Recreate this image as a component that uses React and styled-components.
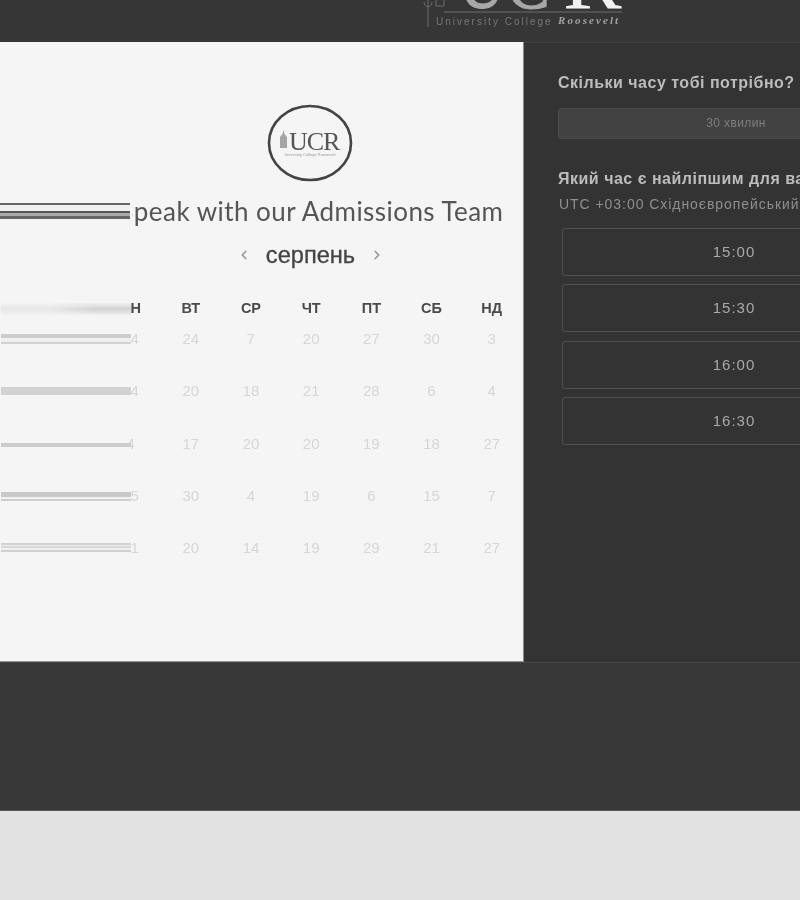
import { createGlobalStyle } from "styled-components";
import styled from "styled-components";
import { ChevronLeft, ChevronRight } from "lucide-react";

const GlobalStyle = createGlobalStyle`
  html, body {
    margin: 0;
    padding: 0;
    background: #e2e2e2;
    font-family: "Liberation Sans", Arial, sans-serif;
  }
`;

const Page = styled.div`
  width: 800px;
  height: 900px;
  overflow: hidden;
  background: #e2e2e2;
  filter: blur(0.45px);
`;

const Header = styled.header`
  height: 42px;
  background: #363636;
  display: flex;
  padding-left: 422px;
  box-sizing: border-box;
`;

const Main = styled.main`
  display: flex;
  height: 620px;
  width: 1000px;
`;

const LeftCard = styled.section`
  width: 524px;
  flex: none;
  box-sizing: border-box;
  background: #f5f5f5;
  border-right: 1px solid #8c8c8c;
  border-bottom: 1px solid #8c8c8c;
  padding: 62px 0 0 100px;
  display: flex;
  flex-direction: column;
  align-items: center;
`;

const LogoWrap = styled.div`
  margin-right: 4px;
  height: 78px;
`;

const Heading = styled.h1`
  position: relative;
  margin: 14px 0 0;
  width: 100%;
  height: 30px;
  text-align: center;
  font-family: Lato, sans-serif;
  font-weight: 400;
  font-size: 26px;
  letter-spacing: 0.45px;
  line-height: 30px;
  color: #555;
  white-space: nowrap;
`;

const HeadingText = styled.span`
  display: inline-block;
  clip-path: inset(0 0 0 13px);
`;

const Streak = styled.div`
  position: absolute;
  left: -100px;
  width: 130px;
  top: ${(p) => p.$top}px;
  height: ${(p) => p.$height}px;
  background: ${(p) => p.$bg};
`;

const MonthRow = styled.div`
  margin: 14px 2px 0 0;
  height: 30px;
  display: flex;
  align-items: center;
  justify-content: center;
  gap: 15px;
  font-size: 23.6px;
  color: #444;
  -webkit-text-stroke: 0.3px #444;
  svg {
    color: #999;
  }
`;

const Calendar = styled.div`
  margin-top: 33px;
  width: 422px;
`;

const Week = styled.div`
  position: relative;
  display: grid;
  grid-template-columns: repeat(7, 60.2px);
  height: ${(p) => (p.$head ? "10px" : "52.25px")};
  line-height: ${(p) => (p.$head ? "10px" : "52.25px")};
  text-align: center;
  font-size: ${(p) => (p.$head ? "14.5px" : "15px")};
  font-weight: ${(p) => (p.$head ? 700 : 400)};
  color: ${(p) => (p.$head ? "#4a4a4a" : "#d6d6d6")};
  & > div:first-child {
    clip-path: ${(p) => (p.$clip ? "inset(0 0 0 30px)" : "none")};
  }
`;

const RightPanel = styled.section`
  flex: 1;
  background: #333333;
  box-sizing: border-box;
  border-top: 1px solid #424242;
  padding: 30px 0 0 34px;
`;

const Question = styled.h2`
  margin: ${(p) => p.$top || 0}px 0 0;
  font-size: 16px;
  line-height: 20px;
  font-weight: 700;
  letter-spacing: 0.5px;
  color: #bdbdbd;
  white-space: nowrap;
`;

const DurationButton = styled.div`
  margin-top: 15px;
  width: 356px;
  height: 31px;
  box-sizing: border-box;
  background: #424242;
  border: 1px solid #4b4b4b;
  border-radius: 3px;
  text-align: center;
  line-height: 29px;
  font-size: 12px;
  letter-spacing: 0.4px;
  color: #7f7f7f;
`;

const Zone = styled.div`
  margin-top: 7px;
  font-size: 14px;
  line-height: 16px;
  letter-spacing: 0.95px;
  color: #8f8f8f;
  white-space: nowrap;
  padding-left: 1px;
`;

const Slots = styled.div`
  margin: 16px 0 0 4px;
  display: flex;
  flex-direction: column;
  gap: 8.3px;
`;

const Slot = styled.div`
  width: 344px;
  height: 48px;
  box-sizing: border-box;
  border: 1px solid #505050;
  border-radius: 3px;
  text-align: center;
  line-height: 46px;
  font-size: 15px;
  letter-spacing: 1px;
  color: #a8a8a8;
`;

const Footer = styled.footer`
  height: 149px;
  box-sizing: border-box;
  background: #383838;
  border-top: 1px solid #474747;
  border-bottom: 1px solid #555;
`;

const HeaderLogo = () => (
  <svg width="204" height="42" viewBox="0 0 204 42">
    <path d="M6 0v27M2 2c0 6 8 6 8 0M14 0v6h8V0" fill="none" stroke="#6b6b6b" strokeWidth="1" />
    <path d="M22 12h178" stroke="#6e6e6e" strokeWidth="1" />
    <text x="36" y="8" fontFamily="Liberation Serif, serif" fontSize="80" fill="#a8a8a8" stroke="#a8a8a8" strokeWidth="1" textLength="92" lengthAdjust="spacingAndGlyphs">UC</text>
    <text x="141" y="8" fontFamily="Liberation Serif, serif" fontSize="88" fill="#f2f2f2">R</text>
    <text x="14" y="25" fontFamily="Liberation Sans, sans-serif" fontSize="10" letterSpacing="2" fill="#777">University College</text>
    <text x="136" y="24" fontFamily="Liberation Serif, serif" fontSize="11" fontWeight="700" fontStyle="italic" letterSpacing="2.1" fill="#a2a2a2">Roosevelt</text>
  </svg>
);

const RoundLogo = () => (
  <svg width="86" height="78" viewBox="0 0 86 78">
    <ellipse cx="43" cy="39" rx="41" ry="37" fill="none" stroke="#444" strokeWidth="2.6" />
    <path d="M13 44V33l2.500-3 1-4 1 4 2.500 3v11z" fill="#a5a5a5" />
    <text x="22" y="46" fontFamily="Liberation Serif, serif" fontSize="26" letterSpacing="-1" fill="#555">UCR</text>
    <text x="43" y="52" textAnchor="middle" fontFamily="Liberation Sans, sans-serif" fontSize="4" fill="#9a9a9a">University College Roosevelt</text>
  </svg>
);

const weekdays = ["ПН", "ВТ", "СР", "ЧТ", "ПТ", "СБ", "НД"];

const weeks = [
  {
    days: [24, 24, 7, 20, 27, 30, 3],
    streak: {
      top: 21,
      height: 10,
      bg: "linear-gradient(#cdcdcd 0 4px, #f0f0f0 4px 8px, #d2d2d2 8px 10px)",
    },
  },
  {
    days: [14, 20, 18, 21, 28, 6, 4],
    streak: { top: 22, height: 8, bg: "#d2d2d2" },
  },
  {
    days: [4, 17, 20, 20, 19, 18, 27],
    streak: { top: 25.5, height: 4, bg: "#cccccc" },
  },
  {
    days: [25, 30, 4, 19, 6, 15, 7],
    streak: {
      top: 22,
      height: 9,
      bg: "linear-gradient(#c9c9c9 0 5px, #f0f0f0 5px 7px, #cfcfcf 7px 9px)",
    },
  },
  {
    days: [21, 20, 14, 19, 29, 21, 27],
    streak: {
      top: 21,
      height: 9,
      bg: "linear-gradient(#d2d2d2 0 2px, #ececec 2px 3px, #d8d8d8 3px 5px, #efefef 5px 7px, #d0d0d0 7px 9px)",
    },
  },
];

const slots = ["15:00", "15:30", "16:00", "16:30"];

const App = () => {
  return (
    <Page>
      <GlobalStyle />
      <Header>
        <HeaderLogo />
      </Header>
      <Main>
        <LeftCard>
          <LogoWrap>
            <RoundLogo />
          </LogoWrap>
          <Heading>
            <HeadingText>Speak with our Admissions Team</HeadingText>
            <Streak
              $top={7}
              $height={16}
              $bg="linear-gradient(#666 0 2px, #f0f0f0 2px 8px, #555 8px 10px, #aaa 10px 13px, #666 13px 16px)"
            />
          </Heading>
          <MonthRow>
            <ChevronLeft size={14} strokeWidth={3} />
            <span>серпень</span>
            <ChevronRight size={14} strokeWidth={3} />
          </MonthRow>
          <Calendar>
            <Week $head $clip>
              {weekdays.map((day) => (
                <div key={day}>{day}</div>
              ))}
              <Streak
                $top={0}
                $height={12}
                $bg="linear-gradient(90deg, rgba(245, 245, 245, 0.6) 0, rgba(245, 245, 245, 0.6) 50px, transparent 95px), linear-gradient(#f0f0f0, #d2d2d2 50%, #eeeeee)"
              />
            </Week>
            {weeks.map(({ days, streak }, index) => (
              <Week key={index} $clip={days[0] > 9}>
                {days.map((day, i) => (
                  <div key={i}>{day}</div>
                ))}
                <Streak $top={streak.top} $height={streak.height} $bg={streak.bg} />
              </Week>
            ))}
          </Calendar>
        </LeftCard>
        <RightPanel>
          <Question>Скільки часу тобі потрібно?</Question>
          <DurationButton>30 хвилин</DurationButton>
          <Question $top={30}>Який час є найліпшим для вас?</Question>
          <Zone>UTC +03:00 Східноєвропейський час</Zone>
          <Slots>
            {slots.map((slot) => (
              <Slot key={slot}>{slot}</Slot>
            ))}
          </Slots>
        </RightPanel>
      </Main>
      <Footer />
    </Page>
  );
};

export default App;
